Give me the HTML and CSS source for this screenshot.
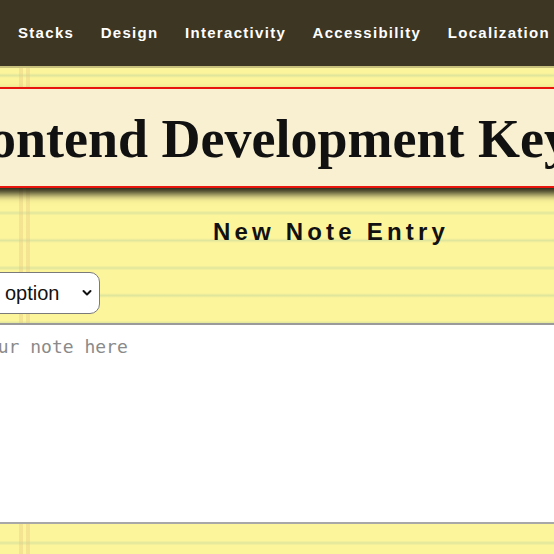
FILE: index.html
```html
<!DOCTYPE html>
<html lang="en">
<head>
<meta charset="utf-8">
<title>Frontend Development Keynotes</title>
<link rel="stylesheet" href="styles.css">
</head>
<body>
<nav class="topnav">
  <a class="navlink" href="#">Stacks</a>
  <a class="navlink" href="#">Design</a>
  <a class="navlink" href="#">Interactivity</a>
  <a class="navlink" href="#">Accessibility</a>
  <a class="navlink" href="#">Localization</a>
</nav>
<main class="page">
  <header class="titlebox">
    <h1 class="title">Frontend Development Keynotes</h1>
  </header>
  <h2 class="subtitle">New Note Entry</h2>
  <form class="noteform">
    <span class="pickwrap">
      <select class="picker">
        <option>Select an option</option>
      </select>
      <svg class="chev" width="10" height="8" viewBox="0 0 10 8"><path d="M1.5 2 L5 5.5 L8.5 2" fill="none" stroke="#111" stroke-width="2" stroke-linecap="round" stroke-linejoin="round"/></svg>
    </span>
    <textarea class="note" placeholder="Write your note here"></textarea>
  </form>
</main>
</body>
</html>
```
FILE: styles.css
```css
html, body {
  margin: 0;
  padding: 0;
  overflow: hidden;
}
body {
  width: 554px;
  height: 554px;
  background-color: #fdf59b;
  background-image:
    linear-gradient(to right, transparent 19px, rgba(226, 196, 130, 0.35) 19px, rgba(226, 196, 130, 0.35) 23px, transparent 23px, transparent 26px, rgba(226, 196, 130, 0.35) 26px, rgba(226, 196, 130, 0.35) 30px, transparent 30px),
    repeating-linear-gradient(to bottom, transparent 0, transparent 18px, #e0e69c 20.5px, transparent 23px, transparent 27.5px);
  font-family: "Liberation Sans", Arial, sans-serif;
}
.topnav {
  display: flex;
  align-items: center;
  gap: 26.5px;
  height: 64px;
  padding: 0 0 2px 18px;
  box-sizing: content-box;
  background: #3d3623;
  border-bottom: 2px solid #c7bf7c;
  white-space: nowrap;
}
.navlink {
  color: #fff;
  text-decoration: none;
  font-weight: bold;
  font-size: 15px;
  letter-spacing: 1.3px;
}
.page {
  width: 862px;
  margin-left: -100px;
}
.titlebox {
  margin-top: 19px;
  background: #f8f0d0;
  border: 2px solid #e8150c;
  box-shadow: 0 6px 8px rgba(0, 0, 0, 0.85);
  height: 97px;
}
.title {
  margin: 0;
  padding: 20px 38px 0 0;
  font-family: "Liberation Serif", "Times New Roman", serif;
  font-weight: bold;
  font-size: 54px;
  line-height: 60px;
  color: #111;
  text-align: center;
  white-space: nowrap;
}
.subtitle {
  margin: 30px 0 0;
  font-size: 24px;
  line-height: 28px;
  font-weight: bold;
  letter-spacing: 4.2px;
  color: #111;
  text-align: center;
}
.noteform {
  margin-top: 26px;
  display: flex;
  flex-direction: column;
  align-items: flex-start;
  gap: 9px;
}
.pickwrap {
  position: relative;
  display: inline-block;
}
.picker {
  appearance: none;
  -webkit-appearance: none;
  width: 200px;
  height: 42px;
  padding: 0 30px 0 15px;
  font-family: "Liberation Sans", Arial, sans-serif;
  font-size: 20px;
  color: #111;
  background: #fff;
  border: 1px solid #7a7a7a;
  border-radius: 10px;
  display: block;
}
.chev {
  position: absolute;
  right: 8px;
  top: 17px;
  pointer-events: none;
}
.note {
  display: block;
  width: 100%;
  height: 201px;
  box-sizing: border-box;
  padding: 11px 11px 11px 9px;
  border: 2px solid #a8a8a8;
  border-top-color: #9a9a9a;
  background: #fff;
  font-family: "DejaVu Sans Mono", monospace;
  font-size: 18px;
  resize: none;
  margin: 0;
}
.note::placeholder {
  color: #8a8a8a;
}
```
